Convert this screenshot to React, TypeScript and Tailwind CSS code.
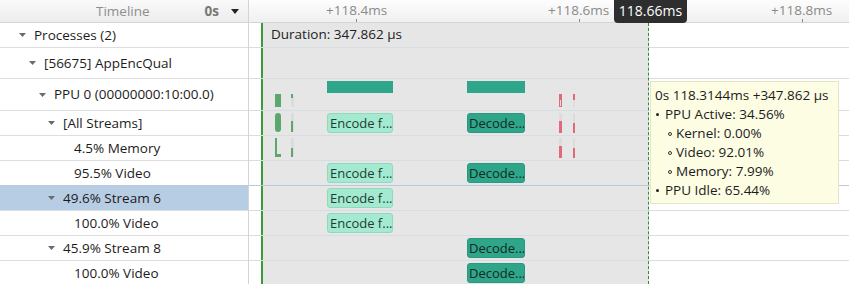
import React from "react";

type Row = {
  label: string;
  pad: string; // padding class
  tri?: boolean;
  h: string;
  selected?: boolean;
  blueLine?: boolean;
  track?: React.ReactNode;
};

const Tri = () => (
  <svg width="7" height="4" viewBox="0 0 7 4" className="block shrink-0 mr-[8px]">
    <polygon points="0,0 7,0 3.5,4" fill="#6b6b6b" />
  </svg>
);

const Encode = () => (
  <div className="absolute left-[78px] top-[2px] w-[66px] h-[20px] rounded-[3px] bg-[#a4ead1] border border-[#8fdabd] text-[13px] leading-[18px] text-[#1d3d33] pl-[2px] overflow-hidden whitespace-nowrap">
    Encode f...
  </div>
);

const Decode = () => (
  <div className="absolute left-[218px] top-[2px] w-[58px] h-[20px] rounded-[3px] bg-[#2fa68a] border border-[#2a987e] text-[13px] leading-[18px] text-[#0f2b24] pl-[1px] overflow-hidden whitespace-nowrap">
    Decode...
  </div>
);

const GreenMarks = ({ variant }: { variant: 0 | 1 | 2 }) => {
  if (variant === 0)
    return (
      <>
        <div className="absolute left-[26px] top-[15px] w-[6px] h-[13px] bg-[#5aa86b]" />
        <div className="absolute left-[42px] top-[15px] w-[3px] h-[13px] bg-[#dcdcdc]" />
        <div className="absolute left-[42px] top-[15px] w-[2px] h-[4px] bg-[#5aa86b]" />
      </>
    );
  if (variant === 1)
    return (
      <>
        <div className="absolute left-[26px] top-[2px] w-[6px] h-[19px] rounded-full bg-[#5aa86b]" />
        <div className="absolute left-[42px] top-[2px] w-[3px] h-[19px] bg-[#dcdcdc]" />
        <div className="absolute left-[42px] top-[10px] w-[2px] h-[11px] bg-[#5aa86b]" />
      </>
    );
  return (
    <>
      <div className="absolute left-[26px] top-[2px] w-[2px] h-[19px] bg-[#5aa86b]" />
      <div className="absolute left-[26px] top-[18px] w-[6px] h-[3px] bg-[#5aa86b]" />
      <div className="absolute left-[42px] top-[2px] w-[3px] h-[19px] bg-[#dcdcdc]" />
      <div className="absolute left-[42px] top-[12px] w-[2px] h-[9px] bg-[#5aa86b]" />
    </>
  );
};

const RedMarks = ({ variant }: { variant: 0 | 1 }) => {
  if (variant === 0)
    return (
      <>
        <div className="absolute left-[310px] top-[15px] w-[3px] h-[13px] bg-[#dddddd] border border-[#e06a78]" />
        <div className="absolute left-[310px] top-[15px] w-[3px] h-[6px] bg-[#e06a78]" />
        <div className="absolute left-[324px] top-[15px] w-[2px] h-[13px] bg-[#dddddd]" />
        <div className="absolute left-[324px] top-[15px] w-[2px] h-[6px] bg-[#e06a78]" />
      </>
    );
  return (
    <>
      <div className="absolute left-[310px] top-[2px] w-[3px] h-[20px] bg-[#dcdcdc]" />
      <div className="absolute left-[310px] top-[10px] w-[3px] h-[12px] bg-[#e06a78]" />
      <div className="absolute left-[324px] top-[2px] w-[2px] h-[20px] bg-[#dcdcdc]" />
      <div className="absolute left-[324px] top-[12px] w-[2px] h-[10px] bg-[#e06a78]" />
    </>
  );
};

const rows: Row[] = [
  {
    label: "Processes (2)",
    tri: true,
    pad: "pl-[19px]",
    h: "h-[25px]",
    track: (
      <div className="pl-[22px] pt-[2px] text-[13.5px] leading-[18px] text-[#222] whitespace-nowrap">
        Duration: 347.862 µs
      </div>
    ),
  },
  { label: "[56675] AppEncQual", tri: true, pad: "pl-[29px]", h: "h-[31px]" },
  {
    label: "PPU 0 (00000000:10:00.0)",
    tri: true,
    pad: "pl-[39px]",
    h: "h-[32px]",
    track: (
      <>
        <div className="absolute left-[78px] top-[2px] w-[66px] h-[12px] bg-[#2fa68a]" />
        <div className="absolute left-[218px] top-[2px] w-[58px] h-[12px] bg-[#2fa68a]" />
        <GreenMarks variant={0} />
        <RedMarks variant={0} />
      </>
    ),
  },
  {
    label: "[All Streams]",
    tri: true,
    pad: "pl-[48px]",
    h: "h-[25px]",
    track: (
      <>
        <GreenMarks variant={1} />
        <Encode />
        <Decode />
        <RedMarks variant={1} />
      </>
    ),
  },
  {
    label: "4.5% Memory",
    pad: "pl-[74px]",
    h: "h-[25px]",
    track: (
      <>
        <GreenMarks variant={2} />
        <RedMarks variant={1} />
      </>
    ),
  },
  {
    label: "95.5% Video",
    pad: "pl-[74px]",
    h: "h-[25px]",
    blueLine: true,
    track: (
      <>
        <Encode />
        <Decode />
      </>
    ),
  },
  { label: "49.6% Stream 6", tri: true, pad: "pl-[48px]", h: "h-[25px]", selected: true, track: <Encode /> },
  { label: "100.0% Video", pad: "pl-[74px]", h: "h-[25px]", track: <Encode /> },
  { label: "45.9% Stream 8", tri: true, pad: "pl-[48px]", h: "h-[25px]", track: <Decode /> },
  { label: "100.0% Video", pad: "pl-[74px]", h: "h-[25px]", track: <Decode /> },
];

const Bullet = () => <span className="w-[3px] h-[3px] rounded-full bg-[#222] ml-[1px] mr-[6px] shrink-0" />;
const Circle = () => <span className="w-[4px] h-[4px] rounded-full border border-[#333] mr-[4px] shrink-0" />;

export default function App() {
  return (
    <div
      className="w-[849px] h-[284px] overflow-hidden bg-white flex flex-col text-[#1c1c1c]"
      style={{ fontFamily: '"Open Sans", "Noto Sans", sans-serif' }}
    >
      {/* Header */}
      <div className="flex h-[23px] shrink-0 border-b border-[#d6d6d6]">
        <div className="w-[249px] shrink-0 flex items-center border-r border-[#d4d4d4] bg-gradient-to-b from-[#fafafa] to-[#ececec]">
          <div className="flex-1 text-[13.5px] text-[#8e8e8e] pl-[96px]">Timeline</div>
          <div className="text-[13.5px] font-bold text-[#777] mr-[12px]">0s</div>
          <svg width="8" height="5" viewBox="0 0 8 5" className="block mr-[9px]">
            <polygon points="0,0 8,0 4,5" fill="#222" />
          </svg>
        </div>
        <div className="flex-1 relative bg-gradient-to-b from-[#fdfdfd] to-[#f0f0f0]">
          <div className="absolute left-[77px] top-[1px] text-[13.5px] text-[#8a8a8a] leading-[18px]">+118.4ms</div>
          <div className="absolute left-[107px] top-[19px] w-px h-[3px] bg-[#8a8a8a]" />
          <div className="absolute left-[299px] top-[1px] text-[13.5px] text-[#8a8a8a] leading-[18px]">+118.6ms</div>
          <div className="absolute left-[330px] top-[19px] w-px h-[3px] bg-[#8a8a8a]" />
          <div className="absolute left-[522px] top-[1px] text-[13.5px] text-[#8a8a8a] leading-[18px]">+118.8ms</div>
          <div className="absolute left-[553px] top-[19px] w-px h-[3px] bg-[#8a8a8a]" />
          <div className="absolute left-[365px] top-0 w-[73px] h-[23px] rounded-b-[4px] bg-[#2e2e2e] text-white text-[14px] leading-[22px] text-center z-20">
            118.66ms
          </div>
        </div>
      </div>

      {/* Body */}
      <div className="flex flex-1 min-h-0">
        <div className="w-[249px] shrink-0 border-r border-[#d4d4d4] flex flex-col">
          {rows.map((r, i) => (
            <div
              key={i}
              className={`shrink-0 flex items-center border-b whitespace-nowrap text-[13.5px] ${r.h} ${r.pad} ${
                r.selected ? "bg-[#b7cde4]" : ""
              } ${r.blueLine ? "border-[#b9c9db]" : "border-[#dedede]"}`}
            >
              {r.tri && <Tri />}
              <span>{r.label}</span>
            </div>
          ))}
        </div>
        <div className="flex-1 relative">
          {/* selection range background */}
          <div className="absolute left-[12px] top-0 bottom-0 w-[388px] bg-[#e6e6e6] border-l-2 border-[#3a9a3a]" />
          {/* cursor line */}
          <div className="absolute left-[399px] top-0 bottom-0 w-0 border-l border-dashed border-[#2f8f2f] z-10" />
          <div className="relative flex flex-col">
            {rows.map((r, i) => (
              <div
                key={i}
                className={`shrink-0 relative border-b ${r.h} ${r.blueLine ? "border-[#b9c9db]" : "border-[#d8dde4]"}`}
              >
                {r.track}
              </div>
            ))}
          </div>
          {/* tooltip */}
          <div className="absolute left-[401px] top-[58px] w-[189px] h-[123px] bg-[#fdfde4] border border-[#e4e4c8] z-20 px-[4px] pt-[4px] text-[13.5px] leading-[19px] text-[#1c1c1c] whitespace-nowrap flex flex-col">
            <div>0s 118.3144ms +347.862 µs</div>
            <div className="flex items-center">
              <Bullet />
              PPU Active: 34.56%
            </div>
            <div className="flex items-center pl-[13px]">
              <Circle />
              Kernel: 0.00%
            </div>
            <div className="flex items-center pl-[13px]">
              <Circle />
              Video: 92.01%
            </div>
            <div className="flex items-center pl-[13px]">
              <Circle />
              Memory: 7.99%
            </div>
            <div className="flex items-center">
              <Bullet />
              PPU Idle: 65.44%
            </div>
          </div>
        </div>
      </div>
    </div>
  );
}
